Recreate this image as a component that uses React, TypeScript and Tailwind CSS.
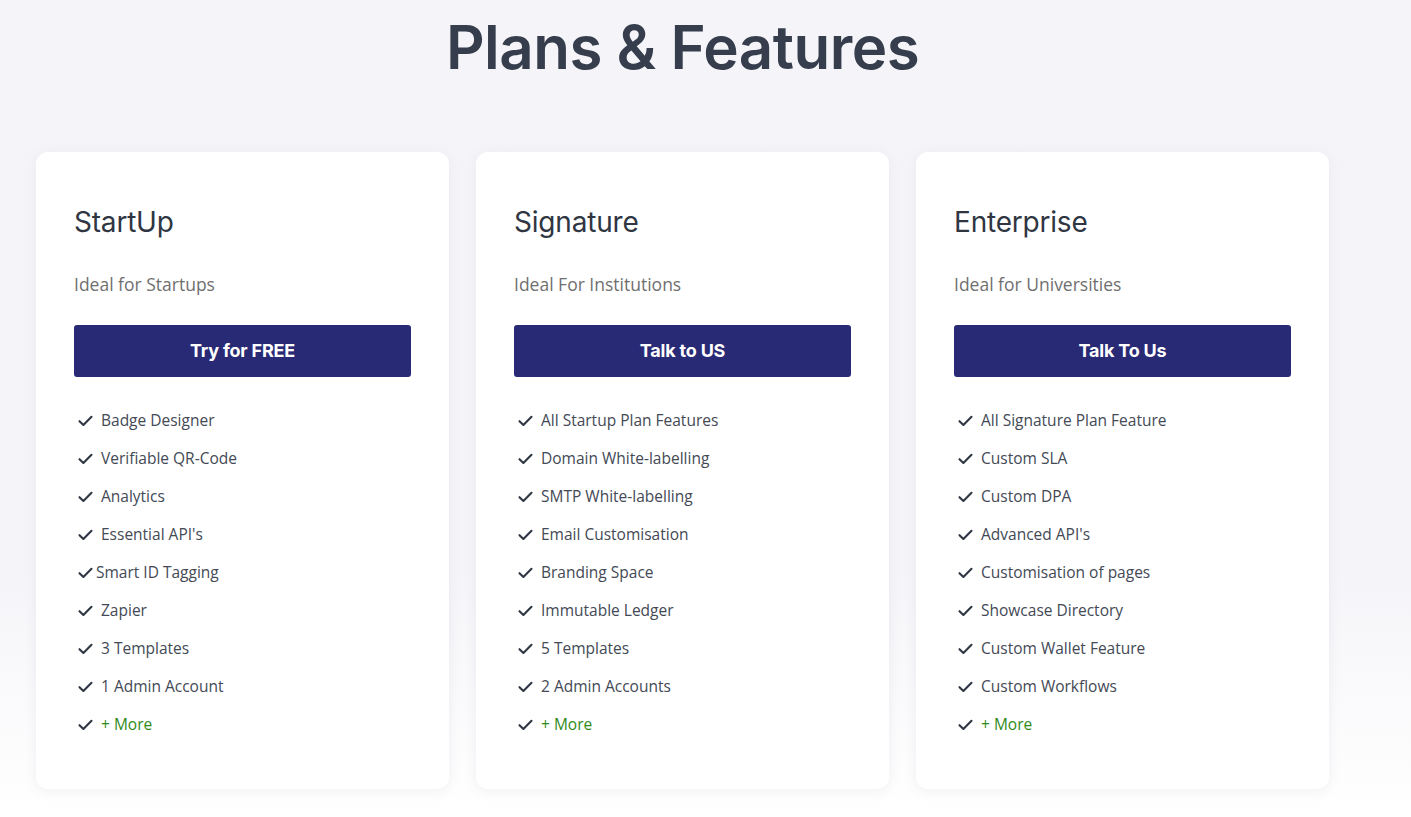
import React from "react";

type Plan = {
  name: string;
  tagline: string;
  cta: string;
  features: string[];
};

const PLANS: Plan[] = [
  {
    name: "StartUp",
    tagline: "Ideal for Startups",
    cta: "Try for FREE",
    features: [
      "Badge Designer",
      "Verifiable QR-Code",
      "Analytics",
      "Essential API's",
      "Smart ID Tagging",
      "Zapier",
      "3 Templates",
      "1 Admin Account",
    ],
  },
  {
    name: "Signature",
    tagline: "Ideal For Institutions",
    cta: "Talk to US",
    features: [
      "All Startup Plan Features",
      "Domain White-labelling",
      "SMTP White-labelling",
      "Email Customisation",
      "Branding Space",
      "Immutable Ledger",
      "5 Templates",
      "2 Admin Accounts",
    ],
  },
  {
    name: "Enterprise",
    tagline: "Ideal for Universities",
    cta: "Talk To Us",
    features: [
      "All Signature Plan Feature",
      "Custom SLA",
      "Custom DPA",
      "Advanced API's",
      "Customisation of pages",
      "Showcase Directory",
      "Custom Wallet Feature",
      "Custom Workflows",
    ],
  },
];

function Check() {
  return (
    <svg width="15" height="12" viewBox="0 0 15 12" className="flex-shrink-0">
      <path
        d="M1.5 6.2 L5.4 10 L13.5 1.8"
        fill="none"
        stroke="#2f3744"
        strokeWidth="2.1"
        strokeLinecap="round"
        strokeLinejoin="round"
      />
    </svg>
  );
}

function FeatureRow({ text, tight, more }: { text: string; tight?: boolean; more?: boolean }) {
  return (
    <li className={`flex items-center h-[38px] pl-1 ${tight ? "gap-[3px]" : "gap-[8px]"}`}>
      <Check />
      <span className={`text-[15.5px] ${more ? "text-[#2f8a17]" : "text-[#434955]"}`}>{text}</span>
    </li>
  );
}

function PlanCard({ plan }: { plan: Plan }) {
  return (
    <div className="w-[413px] h-[637px] bg-white rounded-[12px] shadow-[0_2px_14px_rgba(30,30,60,0.06)] px-[38px] pt-[50px]">
      <h2 className="text-[28px] leading-[40px] text-[#2f3642] font-['Inter',sans-serif] tracking-[-0.2px]">
        {plan.name}
      </h2>
      <p className="mt-[29px] text-[17.5px] leading-[26px] text-[#6f6f6f]">{plan.tagline}</p>
      <button className="mt-[28px] w-full h-[52px] rounded-[3px] bg-[#292a75] text-white text-[18px] font-bold font-['Inter',sans-serif] tracking-[-0.2px]">
        <span className="relative -top-px">{plan.cta}</span>
      </button>
      <ul className="mt-[25px]">
        {plan.features.map((f) => (
          <FeatureRow key={f} text={f} tight={f === "Smart ID Tagging"} />
        ))}
        <FeatureRow text="+ More" more />
      </ul>
    </div>
  );
}

export default function App() {
  return (
    <div className="min-h-[817px] bg-gradient-to-b from-[#f5f5f9] from-70% to-white font-['Open_Sans',sans-serif]">
      <div className="w-[1293px] ml-[36px]">
        <h1 className="text-center pt-[8px] text-[60px] leading-[78px] font-semibold text-[#363e4d] font-['Inter',sans-serif] tracking-[-0.5px]">
          Plans &amp; Features
        </h1>
        <div className="mt-[66px] flex gap-[27px]">
          {PLANS.map((p) => (
            <PlanCard key={p.name} plan={p} />
          ))}
        </div>
      </div>
    </div>
  );
}
